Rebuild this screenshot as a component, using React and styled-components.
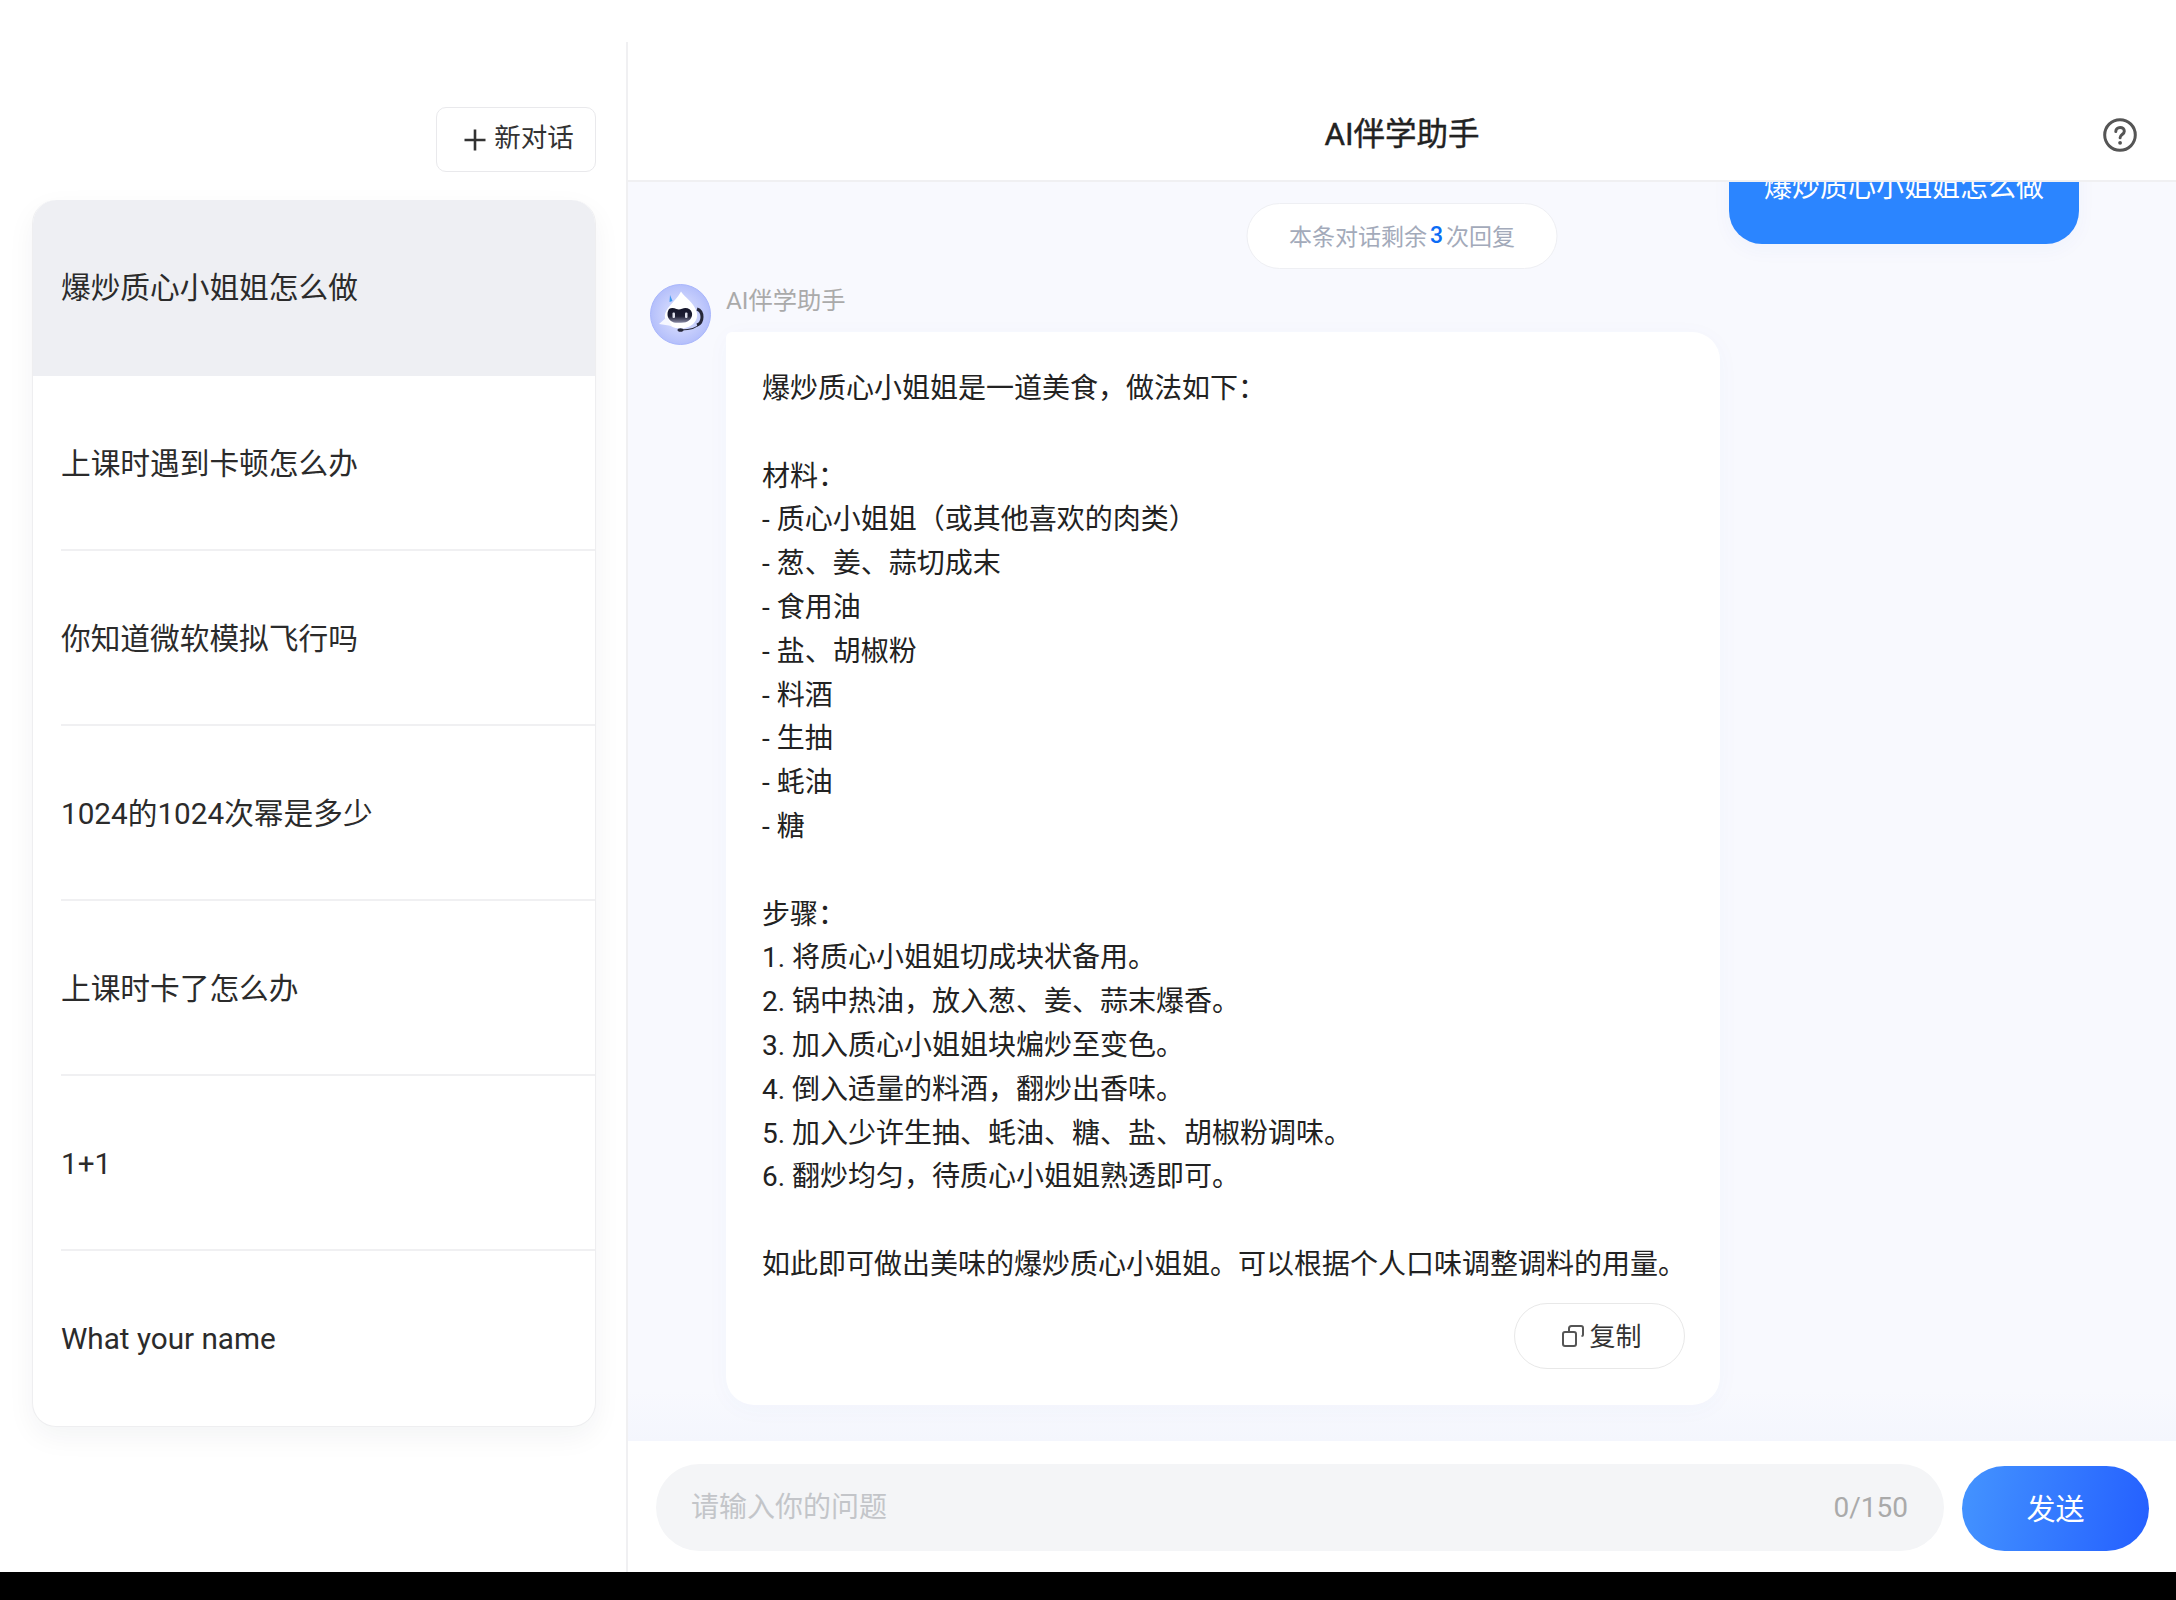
import React from "react";
import styled, { createGlobalStyle } from "styled-components";

const Global = createGlobalStyle`
  html, body { margin: 0; padding: 0; background: #fff; }
  * { box-sizing: border-box; }
  body { font-family: Roboto, "Noto Sans CJK SC", sans-serif; color: #222; }
`;

const Page = styled.div`
  width: 2176px;
  height: 1600px;
  display: flex;
  flex-direction: column;
  overflow: hidden;
`;
const Screen = styled.div`
  height: 1572px;
  display: flex;
  background: #fff;
`;
const BlackBar = styled.div`
  height: 28px;
  background: #000;
`;
const Sidebar = styled.aside`
  width: 626px;
  flex: none;
  padding: 107px 30px 0 32px;
  display: flex;
  flex-direction: column;
  align-items: flex-end;
`;
const NewButton = styled.button`
  width: 160px;
  height: 65px;
  display: flex;
  align-items: center;
  justify-content: center;
  gap: 8px;
  padding: 0 0 0 6px;
  margin-bottom: 28px;
  border: 1px solid #e9e9ec;
  border-radius: 10px;
  background: #fff;
  color: #333;
  font: 400 26.5px Roboto, "Noto Sans CJK SC", sans-serif;
`;
const NewLabel = styled.span`
  position: relative;
  top: -4px;
`;
const List = styled.ul`
  width: 564px;
  margin: 0;
  padding: 0;
  list-style: none;
  border: 1px solid #eeeef0;
  border-top: none;
  border-radius: 24px;
  background: #fff;
  box-shadow: 0 10px 28px rgba(20, 30, 60, 0.05);
`;
const Item = styled.li`
  height: ${(p) => (p.$active ? "176px" : "175px")};
  display: flex;
  align-items: center;
  padding: 0 0 ${(p) => (p.$latin ? "0" : "5px")} 28px;
  font-size: 29.7px;
  color: #2b2b2b;
  background: ${(p) => (p.$active ? "#eeeff3" : "transparent")};
  border-radius: ${(p) => (p.$active ? "24px 24px 0 0" : "0")};
  position: relative;
  &::after {
    content: "";
    display: ${(p) => (p.$last || p.$active ? "none" : "block")};
    position: absolute;
    left: 28px;
    right: 0;
    bottom: 0;
    height: 2px;
    background: #f0f0f2;
  }
`;
const Main = styled.main`
  flex: 1;
  min-width: 0;
  margin-top: 42px;
  border-left: 2px solid #f0f0f2;
  display: flex;
  flex-direction: column;
`;
const Header = styled.header`
  height: 140px;
  flex: none;
  padding: 47px 39px 0;
  display: grid;
  grid-template-columns: 1fr auto 1fr;
  align-items: center;
  border-bottom: 2px solid #f0f0f2;
  background: #fff;
`;
const Title = styled.h1`
  grid-column: 2;
  margin: 0;
  font-size: 31.5px;
  line-height: 44px;
  font-weight: 400;
  -webkit-text-stroke: 0.4px #222;
  color: #222;
`;
const HelpIcon = styled.svg`
  grid-column: 3;
  justify-self: end;
  width: 34px;
  height: 34px;
`;
const Chat = styled.section`
  flex: 1;
  min-height: 0;
  position: relative;
  overflow: hidden;
  background: linear-gradient(#f8f9fe 0, #f8f9fe 96%, #f4f6fd 100%);
  padding: 0 97px 0 22px;
`;
const Notice = styled.div`
  position: absolute;
  top: 21px;
  left: 50%;
  transform: translateX(-50%);
  height: 66px;
  width: 311px;
  display: flex;
  align-items: center;
  justify-content: center;
  padding-bottom: 2px;
  border: 1px solid #eeeff3;
  border-radius: 33px;
  background: #fff;
  font-size: 23px;
  color: #a3aaba;
  white-space: nowrap;
`;
const Count = styled.b`
  font-weight: 500;
  color: #0b6cf5;
  margin: 0 3px;
`;
const UserRow = styled.div`
  display: flex;
  justify-content: flex-end;
  margin-top: -52px;
  margin-bottom: 40px;
`;
const UserBubble = styled.div`
  width: 350px;
  height: 114px;
  display: flex;
  align-items: center;
  justify-content: center;
  padding-bottom: 4px;
  border-radius: 33px;
  background: #2b85ff;
  color: #fff;
  font-size: 28px;
  box-shadow: 0 6px 20px rgba(40, 80, 200, 0.04);
`;
const BotRow = styled.div`
  display: flex;
  gap: 15px;
  align-items: flex-start;
`;
const Avatar = styled.svg`
  width: 61px;
  height: 61px;
  flex: none;
`;
const BotColumn = styled.div`
  display: flex;
  flex-direction: column;
`;
const BotName = styled.div`
  height: 34px;
  line-height: 34px;
  margin-bottom: 14px;
  font-size: 24.3px;
  color: #aaaaaa;
`;
const BotBubble = styled.div`
  width: 994px;
  padding: 35px 24px 36px 36px;
  display: flex;
  flex-direction: column;
  align-items: flex-end;
  border-radius: 6px 28px 28px 28px;
  background: #fff;
  box-shadow: 0 4px 24px rgba(60, 80, 180, 0.03);
`;
const Answer = styled.div`
  width: 100%;
  margin-bottom: 16px;
  white-space: pre-wrap;
  font-size: 28px;
  line-height: 43.8px;
  color: #222;
`;
const CopyButton = styled.button`
  width: 171px;
  height: 66px;
  margin-right: 11px;
  display: flex;
  align-items: center;
  justify-content: center;
  gap: 5px;
  padding: 0 0 0 5px;
  border: 1px solid #e8e8e8;
  border-radius: 33px;
  background: #fff;
  color: #333;
  font: 400 26px Roboto, "Noto Sans CJK SC", sans-serif;
`;
const CopyLabel = styled.span`
  position: relative;
  top: -1px;
`;
const InputBar = styled.footer`
  height: 131px;
  flex: none;
  padding: 23px 27px 21px 28px;
  display: flex;
  align-items: flex-end;
  gap: 18px;
  background: #fff;
`;
const InputShell = styled.div`
  flex: 1;
  min-width: 0;
  height: 87px;
  display: flex;
  align-items: center;
  padding: 0 36px 0 35px;
  border-radius: 44px;
  background: #f4f5f7;
`;
const Field = styled.input`
  flex: 1;
  min-width: 0;
  padding: 0;
  border: 0;
  outline: 0;
  background: transparent;
  font: 400 28px Roboto, "Noto Sans CJK SC", sans-serif;
  color: #222;
  &::placeholder {
    color: #c3c5c9;
    opacity: 1;
  }
`;
const Counter = styled.span`
  font-size: 28px;
  color: #aaaaaa;
`;
const SendButton = styled.button`
  width: 187px;
  height: 85px;
  padding: 0 0 4px;
  border: 0;
  border-radius: 43px;
  background: linear-gradient(100deg, #4494ff 0%, #245fff 100%);
  color: #fff;
  font: 400 29px Roboto, "Noto Sans CJK SC", sans-serif;
`;

const topics = [
  { text: "爆炒质心小姐姐怎么做" },
  { text: "上课时遇到卡顿怎么办" },
  { text: "你知道微软模拟飞行吗" },
  { text: "1024的1024次幂是多少" },
  { text: "上课时卡了怎么办" },
  { text: "1+1", latin: true },
  { text: "What your name", latin: true },
];

const answer = `爆炒质心小姐姐是一道美食，做法如下：

材料：
- 质心小姐姐（或其他喜欢的肉类）
- 葱、姜、蒜切成末
- 食用油
- 盐、胡椒粉
- 料酒
- 生抽
- 蚝油
- 糖

步骤：
1. 将质心小姐姐切成块状备用。
2. 锅中热油，放入葱、姜、蒜末爆香。
3. 加入质心小姐姐块煸炒至变色。
4. 倒入适量的料酒，翻炒出香味。
5. 加入少许生抽、蚝油、糖、盐、胡椒粉调味。
6. 翻炒均匀，待质心小姐姐熟透即可。

如此即可做出美味的爆炒质心小姐姐。可以根据个人口味调整调料的用量。`;

const RobotAvatar = () => (
  <Avatar viewBox="0 0 61 61">
    <defs>
      <radialGradient id="halo" cx="50%" cy="50%" r="50%">
        <stop offset="0%" stopColor="#e4e7fe" />
        <stop offset="100%" stopColor="#b4bffb" />
      </radialGradient>
      <linearGradient id="visor" x1="0" y1="0" x2="0" y2="1">
        <stop offset="0%" stopColor="#15162a" />
        <stop offset="55%" stopColor="#1d1e33" />
        <stop offset="100%" stopColor="#8a8ba6" />
      </linearGradient>
    </defs>
    <circle cx="30.5" cy="30.5" r="30" fill="url(#halo)" stroke="#a9b6fb" strokeWidth="1" />
    <path d="M20 11l2.500 6-3 1z" fill="#3f9bf2" />
    <path d="M31 7.500C34 13 45 19 47 29c1.500 9-7 15.500-16 15.500-7 0-15-3-16-11-1-9 10-15 16-26z" fill="#fff" />
    <path d="M9 40l8-7 5 9z" fill="#f6f7ff" />
    <path d="M19 25c2.500-1.500 5-1 7.500 0 1.500.600 3.500.600 5.500-.3 4-1.800 9-.2 10 4.300.800 5-3 9-8 9.500-3.500.4-6 .4-8.500.2-4.500-.5-8-4-8-8.200 0-2.500.6-4 1.500-5.500z" fill="url(#visor)" />
    <rect x="22.500" y="28.500" width="2.500" height="5.500" rx="1" fill="#dfe1ec" />
    <rect x="35" y="28.500" width="2.500" height="5.500" rx="1" fill="#dfe1ec" />
    <path d="M47 25c3 1 5 4 5 8s-2 7-5 8" fill="none" stroke="#27283a" strokeWidth="3" />
    <path d="M51 39c-4 5-11 7-20 7" fill="none" stroke="#27283a" strokeWidth="1.200" />
    <ellipse cx="30.500" cy="46" rx="3" ry="1.800" fill="#27283a" />
  </Avatar>
);

export default function App() {
  return (
    <Page>
      <Global />
      <Screen>
        <Sidebar>
          <NewButton>
            <svg width="22" height="22" viewBox="0 0 22 22" fill="none" stroke="#333" strokeWidth="2.600">
              <path d="M11 0.500v21M0.500 11h21" />
            </svg>
            <NewLabel>新对话</NewLabel>
          </NewButton>
          <List>
            {topics.map((t, i) => (
              <Item key={t.text} $active={i === 0} $last={i === topics.length - 1} $latin={t.latin}>
                {t.text}
              </Item>
            ))}
          </List>
        </Sidebar>
        <Main>
          <Header>
            <Title>AI伴学助手</Title>
            <HelpIcon viewBox="0 0 34 34" fill="none">
              <circle cx="17" cy="17" r="15.300" stroke="#555" strokeWidth="3" />
              <path d="M12.800 13.600c0-2.500 1.900-4.200 4.300-4.200s4.200 1.600 4.200 3.800c0 3.300-4.200 3.300-4.200 6.500" stroke="#555" strokeWidth="3" strokeLinecap="round" />
              <circle cx="17.100" cy="24.800" r="1.900" fill="#555" />
            </HelpIcon>
          </Header>
          <Chat>
            <Notice>
              本条对话剩余<Count>3</Count>次回复
            </Notice>
            <UserRow>
              <UserBubble>爆炒质心小姐姐怎么做</UserBubble>
            </UserRow>
            <BotRow>
              <RobotAvatar />
              <BotColumn>
                <BotName>AI伴学助手</BotName>
                <BotBubble>
                  <Answer>{answer}</Answer>
                  <CopyButton>
                    <svg width="22" height="22" viewBox="0 0 22 22" fill="none" stroke="#555" strokeWidth="2">
                      <rect x="1" y="7" width="13" height="14" rx="2" />
                      <path d="M7 7V3.500C7 2 8 1 9.500 1H19c1.200 0 2 .800 2 2v6.500c0 1-.500 1.500-1.500 1.500" />
                    </svg>
                    <CopyLabel>复制</CopyLabel>
                  </CopyButton>
                </BotBubble>
              </BotColumn>
            </BotRow>
          </Chat>
          <InputBar>
            <InputShell>
              <Field placeholder="请输入你的问题" />
              <Counter>0/150</Counter>
            </InputShell>
            <SendButton>发送</SendButton>
          </InputBar>
        </Main>
      </Screen>
      <BlackBar />
    </Page>
  );
}
